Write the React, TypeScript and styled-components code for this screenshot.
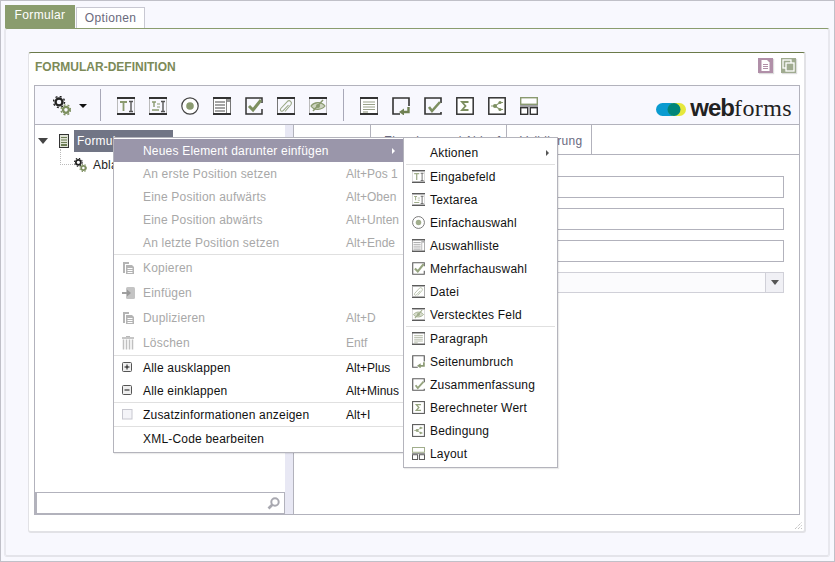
import React from "react";
import styled, { createGlobalStyle } from "styled-components";

const GlobalStyle = createGlobalStyle`
  html, body { margin: 0; padding: 0; background: #f8f8fe; }
  body { font-family: "Liberation Sans", Arial, sans-serif; font-size: 12px; }
  * { box-sizing: border-box; }
`;

const Window = styled.div`
  position: relative;
  width: 835px;
  height: 562px;
  overflow: hidden;
  padding-top: 4px;
  background: #f8f8fe;
  border: 1px solid #c0c0c8;
`;

const TabStrip = styled.div`
  display: flex;
  align-items: flex-end;
  height: 23px;
  margin-left: 4px;
  gap: 1px;
`;

const PageTab = styled.div<{ $active?: boolean }>`
  display: flex;
  align-items: center;
  justify-content: center;
  width: ${p => (p.$active ? "70px" : "69px")};
  height: ${p => (p.$active ? "23px" : "21px")};
  padding-bottom: ${p => (p.$active ? "3px" : "0")};
  color: ${p => (p.$active ? "#fff" : "#6a6a7c")};
  background: ${p => (p.$active ? "#8a9c6e" : "#fff")};
  border: ${p => (p.$active ? "none" : "1px solid #c8c8d2")};
  border-bottom: none;
  letter-spacing: 0.35px;
`;

const Panel = styled.div`
  width: 826px;
  height: 529px;
  margin-left: 3px;
  padding: 23px 0 0 22px;
  background: #f8f8fe;
  border-top: 1px solid #8a9c6e;
  border-left: 2px solid #e8e8ee;
  border-right: 2px solid #e8e8ee;
  border-bottom: 2px solid #e4e4ea;
  border-radius: 3px;
`;

const Card = styled.div`
  display: flex;
  flex-direction: column;
  width: 778px;
  height: 481px;
  padding: 0 5px;
  background: #fff;
  border-top: 1px solid #6b7a4a;
  border-left: 1px solid #e2e2e6;
  border-right: 2px solid #e2e2e6;
  border-bottom: 2px solid #e2e2e6;
  border-radius: 3px;
  position: relative;
`;

const CardHeader = styled.div`
  display: flex;
  align-items: center;
  justify-content: space-between;
  flex: 0 0 32px;
  padding: 0 3px 0 1px;
`;

const CardTitle = styled.h2`
  margin: 0 0 4px;
  font-size: 12px;
  font-weight: bold;
  color: #7c8a58;
`;

const HeaderActions = styled.div`
  display: flex;
  gap: 8px;
  margin-top: -8px;
`;

const ActionButton = styled.span<{ $bg: string }>`
  display: flex;
  width: 15px;
  height: 15px;
  background: ${p => p.$bg};
  box-shadow: 1px 1px 1px #ddd;
`;

const Editor = styled.div`
  display: flex;
  flex-direction: column;
  width: 766px;
  height: 430px;
  border: 1px solid #b2b2bc;
`;

const Toolbar = styled.div`
  display: flex;
  align-items: center;
  flex: 0 0 39px;
  padding-top: 2px;
  background: #f8f8fe;
  border-bottom: 1px solid #b2b2bc;
`;

const GearButton = styled.div`
  display: flex;
  align-items: center;
  gap: 8px;
  padding-left: 18px;
  width: 65px;
`;

const Caret = styled.span`
  width: 0;
  height: 0;
  border-left: 4px solid transparent;
  border-right: 4px solid transparent;
  border-top: 4px solid #111;
`;

const ToolDivider = styled.span`
  flex: none;
  width: 1px;
  height: 32px;
  margin-top: -2px;
  background: #a8a8b8;
`;

const ToolGroup = styled.div`
  display: flex;
  gap: 14px;
  padding: 0 16px;
`;

const Logo = styled.div`
  display: flex;
  align-items: center;
  gap: 4px;
  margin-left: auto;
  margin-right: 7px;
  margin-top: 3px;
  svg {
    margin-top: 3px;
  }
`;

const LogoText = styled.span`
  font-size: 24px;
  line-height: 24px;
  letter-spacing: 0.4px;
  color: #222;
  font-family: "Liberation Serif", serif;
  b {
    font-family: "Liberation Sans", sans-serif;
    font-weight: bold;
    letter-spacing: -1px;
  }
`;

const Body = styled.div`
  display: flex;
  flex: 1;
  min-height: 0;
`;

const TreePane = styled.div`
  display: flex;
  flex-direction: column;
  flex: 0 0 250px;
`;

const Tree = styled.div`
  flex: 1;
  padding: 5px 0 0 3px;
`;

const TreeRow = styled.div`
  display: flex;
  align-items: center;
  height: 22px;
`;

const TreeRowChild = styled(TreeRow)`
  position: relative;
  height: 24px;
  margin-top: 1px;
  padding-left: 36px;
  gap: 6px;
`;

const TreeDots = styled.span`
  position: absolute;
  left: 22px;
  top: -4px;
  width: 13px;
  height: 16px;
  border-left: 1px dotted #bbb;
  border-bottom: 1px dotted #bbb;
`;

const Twist = styled.span`
  width: 0;
  height: 0;
  margin-right: 11px;
  border-left: 5px solid transparent;
  border-right: 5px solid transparent;
  border-top: 6px solid #444;
`;

const TreeSelected = styled.span`
  display: block;
  width: 99px;
  height: 22px;
  margin-left: 5px;
  padding-left: 3px;
  line-height: 22px;
  white-space: nowrap;
  color: #fff;
  background: #717585;
  letter-spacing: 0.2px;
`;

const TreeLabel = styled.span`
  color: #222;
  letter-spacing: 0.2px;
`;

const SearchBar = styled.div`
  display: flex;
  align-items: center;
  justify-content: flex-end;
  height: 22px;
  padding-right: 4px;
  border: 1px solid #b2b2bc;
  border-left-width: 2px;
`;

const Splitter = styled.div`
  flex: 0 0 8px;
  background: #e8e8f4;
`;

const DetailPane = styled.div`
  display: flex;
  flex: 1;
  flex-direction: column;
  border-left: 1px solid #b2b2bc;
`;

const DetailTabs = styled.div`
  display: flex;
  height: 30px;
  border-bottom: 1px solid #b2b2bc;
`;

const DetailTab = styled.div<{ $w: number }>`
  width: ${p => p.$w}px;
  padding: 9px 0 0 13px;
  color: #6a6a80;
  letter-spacing: 0.3px;
  border-right: 1px solid #b2b2bc;
`;

const Form = styled.div`
  display: flex;
  flex-direction: column;
  gap: 10px;
  padding: 21px 15px 0 120px;
`;

const Field = styled.div`
  height: 22px;
  border: 1px solid #b2b2bc;
`;

const SelectField = styled.div`
  display: flex;
  justify-content: flex-end;
  height: 21px;
  border: 1px solid #d0d0d8;
  background: #fbfbfd;
`;

const SelectButton = styled.span`
  display: flex;
  align-items: center;
  justify-content: center;
  width: 18px;
  background: #f0f0f5;
  border-left: 1px solid #d0d0d8;
`;

const SelectArrow = styled.span`
  width: 0;
  height: 0;
  border-left: 4px solid transparent;
  border-right: 4px solid transparent;
  border-top: 5px solid #555;
`;

const Grip = styled.span`
  position: absolute;
  right: 1px;
  bottom: 1px;
  display: flex;
`;

const Menu = styled.div`
  position: absolute;
  background: #fff;
  border: 1px solid #b4b4bc;
  box-shadow: 1px 1px 1px rgba(0, 0, 0, 0.08);
  color: #111;
`;

const MainMenu = styled(Menu)`
  left: 112px;
  top: 136px;
  width: 291px;
  height: 316px;
  padding-top: 1px;
`;

const SubMenu = styled(Menu)`
  left: 402px;
  top: 136px;
  width: 155px;
  height: 331px;
  padding-top: 3px;
`;

const Row = styled.div<{ $h?: number; $disabled?: boolean; $active?: boolean }>`
  display: flex;
  align-items: center;
  height: ${p => p.$h ?? 23}px;
  padding-left: 8px;
  letter-spacing: 0.2px;
  color: ${p => (p.$active ? "#fff" : p.$disabled ? "#a8a8a8" : "#111")};
  background: ${p => (p.$active ? "#9a96aa" : "transparent")};
`;

const RowIcon = styled.span`
  display: flex;
  flex: 0 0 21px;
`;

const RowLabel = styled.span`
  flex: 1;
  white-space: nowrap;
`;

const RowKey = styled.span`
  flex: 0 0 57px;
  letter-spacing: 0;
  white-space: nowrap;
`;

const RowArrow = styled.span<{ $color: string }>`
  width: 0;
  height: 0;
  margin-right: 8px;
  border-top: 3px solid transparent;
  border-bottom: 3px solid transparent;
  border-left: 3px solid ${p => p.$color};
`;

const Sep = styled.div<{ $inset?: number }>`
  height: 1px;
  margin: 0 ${p => p.$inset ?? 0}px;
  background: #e0e0e0;
`;

const SubIcon = styled.span`
  display: flex;
  flex: 0 0 18px;
  opacity: 0.8;
`;

type IconName =
  | "input" | "textarea" | "radio" | "list" | "check" | "file" | "hidden"
  | "paragraph" | "pagebreak" | "summary" | "sum" | "branch" | "layout";

const DARK = "#333";
const GREEN = "#8a9a70";

const TopBottom = () => (
  <>
    <rect x="0" y="0" width="18" height="2" fill={DARK} />
    <rect x="0" y="16" width="18" height="2" fill={DARK} />
    <path d="M.5 2v14M17.5 2v14" stroke="#bbb" fill="none" />
  </>
);

const OpenBox = () => (
  <path d="M17 6V1H1v16h16v-2" stroke={DARK} strokeWidth="1.6" fill="none" />
);

const shapes: Record<IconName, React.ReactNode> = {
  input: (
    <>
      <TopBottom />
      <path d="M3 5h7M6.500 5v9" stroke={GREEN} strokeWidth="1.800" fill="none" />
      <path d="M12 4.500h4M12 14.500h4M14 4.500v10" stroke="#555" strokeWidth="1.400" fill="none" />
    </>
  ),
  textarea: (
    <>
      <TopBottom />
      <path d="M3 5h4M5 5v5M3 13h7" stroke={GREEN} strokeWidth="1.400" fill="none" />
      <path d="M8 7h3M8 10h3" stroke={GREEN} strokeWidth="1" />
      <path d="M12 4.500h4M12 14.500h4M14 4.500v10" stroke="#555" strokeWidth="1.400" fill="none" />
    </>
  ),
  radio: (
    <>
      <circle cx="9" cy="9" r="8.200" fill="#fff" stroke="#444" strokeWidth="1.200" />
      <circle cx="9" cy="9" r="3.800" fill={GREEN} />
    </>
  ),
  list: (
    <>
      <rect x=".5" y=".5" width="17" height="17" fill="#fff" stroke="#777" />
      <rect x="0" y="0" width="18" height="2" fill={DARK} />
      <rect x="0" y="16" width="18" height="2" fill={DARK} />
      <path d="M2 5h10M2 8h10M2 11h10M2 14h10" stroke="#888" strokeWidth="1.300" />
      <path d="M13.500 2v14" stroke="#888" />
      <rect x="14" y="2" width="3" height="3" fill="#999" />
    </>
  ),
  check: (
    <>
      <path d="M17 6V1H1v16h16v-5" stroke={DARK} strokeWidth="1.500" fill="none" />
      <path d="M4 9l4 4 8-10" stroke="#7d8f60" strokeWidth="3" fill="none" />
    </>
  ),
  file: (
    <>
      <TopBottom />
      <path d="M.5 2v14M17.500 2v14" stroke="#777" fill="none" />
      <path
        d="M8 14.500L14 7.500a2.400 2.400 0 0 0-3.500-3.200L3.800 11.500a1.600 1.600 0 0 0 2.400 2.200L11.500 8"
        stroke="#9aa886"
        strokeWidth="1.100"
        fill="none"
      />
    </>
  ),
  hidden: (
    <>
      <TopBottom />
      <path d="M2 9c3-4 10-5 14 0-3 4-11 5-14 0z" fill="#cdd3c0" stroke={GREEN} strokeWidth="1.200" />
      <circle cx="9" cy="9" r="2" fill={GREEN} />
      <path d="M4 14L14 3" stroke={GREEN} strokeWidth="1.500" />
    </>
  ),
  paragraph: (
    <>
      <rect x=".5" y=".5" width="17" height="17" fill="#fff" stroke="#777" />
      <rect x="0" y="0" width="18" height="2" fill={DARK} />
      <rect x="0" y="16" width="18" height="2" fill={DARK} />
      <path d="M3 5h12M3 7.500h12M3 10h12M3 12.500h12" stroke="#9aa28a" strokeWidth="1.200" />
      <path d="M3 15h5" stroke="#9aa28a" strokeWidth="1.200" />
    </>
  ),
  pagebreak: (
    <>
      <path d="M17 9V1H1v16h7" stroke={DARK} strokeWidth="1.600" fill="none" />
      <path d="M16.500 10v5h-6" stroke="#6f8152" strokeWidth="2.400" fill="none" />
      <path d="M12 11.500v7l-5-3.500z" fill="#6f8152" />
    </>
  ),
  summary: (
    <>
      <OpenBox />
      <path d="M5 10l3 4 8-9" stroke="#7d8f60" strokeWidth="2.600" fill="none" />
    </>
  ),
  sum: (
    <>
      <rect x=".8" y=".8" width="16.400" height="16.400" fill="#fff" stroke={DARK} strokeWidth="1.500" />
      <path d="M12.500 5H6l3.500 4L6 13h6.500" stroke="#7d8f60" strokeWidth="1.800" fill="none" />
    </>
  ),
  branch: (
    <>
      <rect x=".8" y=".8" width="16.400" height="16.400" fill="#fff" stroke={DARK} strokeWidth="1.500" />
      <path d="M3 9h4l5-3.500h3M7 9l5 3.500h3" stroke={GREEN} strokeWidth="1.100" fill="none" />
      <circle cx="7" cy="9" r="2" fill="#7d8f60" />
      <circle cx="12" cy="5.500" r="1.600" fill="#7d8f60" />
      <circle cx="12" cy="12.500" r="1.600" fill="#7d8f60" />
    </>
  ),
  layout: (
    <>
      <rect x=".7" y=".7" width="16.600" height="6.600" fill="#fff" stroke={GREEN} strokeWidth="1.400" />
      <rect x=".7" y="10.700" width="7" height="6.600" fill="#fff" stroke={DARK} strokeWidth="1.400" />
      <rect x="10.300" y="10.700" width="7" height="6.600" fill="#fff" stroke={DARK} strokeWidth="1.400" />
      <path d="M0 9h18" stroke="#666" strokeWidth="1.200" />
    </>
  ),
};

const FieldIcon = ({ name, size = 18 }: { name: IconName; size?: number }) => (
  <svg width={size} height={size} viewBox="0 0 18 18">
    {shapes[name]}
  </svg>
);

const GearIcon = ({ size = 18 }: { size?: number }) => (
  <svg width={size} height={size * 1.1} viewBox="0 0 18 20">
    <circle cx="6" cy="6" r="3.500" fill="none" stroke="#222" strokeWidth="2.400" />
    <circle cx="6" cy="6" r="5.600" fill="none" stroke="#222" strokeWidth="1.400" strokeDasharray="2 2.400" />
    <circle cx="13" cy="14" r="3" fill="none" stroke="#7d8f60" strokeWidth="2.400" />
    <circle cx="13" cy="14" r="5" fill="none" stroke="#7d8f60" strokeWidth="1.400" strokeDasharray="2 2.100" />
  </svg>
);

const FormIcon = () => (
  <svg width="10" height="14" viewBox="0 0 10 14">
    <rect x=".5" y=".5" width="9" height="13" fill="#dfe3d6" stroke="#333" />
    <path d="M2 3.500h6M2 6h6M2 8.500h6" stroke="#6d7d55" />
    <rect x="2" y="10" width="6" height="2" fill="#6d7d55" />
  </svg>
);

const SearchIcon = () => (
  <svg width="13" height="13" viewBox="0 0 13 13">
    <circle cx="8" cy="5" r="3.700" fill="none" stroke="#a8a8b0" strokeWidth="2" />
    <path d="M5.500 7.500L1.500 11.500" stroke="#a8a8b0" strokeWidth="2.600" />
  </svg>
);

const CopyIcon = () => (
  <svg width="13" height="14" viewBox="0 0 13 14">
    <path d="M1 1h6v2H3v9H1z" fill="#b4b4b4" />
    <path d="M4 4h6l2 2v7H4z" fill="#b4b4b4" />
    <path d="M5.500 7.500h5M5.500 9.500h5M5.500 11.500h5" stroke="#fff" />
  </svg>
);

const PasteIcon = () => (
  <svg width="14" height="14" viewBox="0 0 14 14">
    <rect x="4" y="1" width="9" height="12" rx="1.500" fill="#c4c4c4" />
    <path d="M0 7h6" stroke="#a0a0a0" strokeWidth="2" />
    <path d="M5 3.500L9 7l-4 3.500z" fill="#999" />
  </svg>
);

const TrashIcon = () => (
  <svg width="12" height="14" viewBox="0 0 12 14">
    <path d="M0 2h12" stroke="#b8b8b8" strokeWidth="1.600" />
    <path d="M1.500 3.500v10M4.500 3.500v10M7.500 3.500v10M10.500 3.500v10" stroke="#c0c0c0" strokeWidth="1.500" />
    <path d="M4 .5h4" stroke="#b8b8b8" />
  </svg>
);

const TreeBoxIcon = ({ plus }: { plus?: boolean }) => (
  <svg width="11" height="11" viewBox="0 0 11 11">
    <rect x=".5" y=".5" width="9" height="9" rx="1" fill="#eee" stroke="#555" />
    <path d="M2.500 5h5" stroke="#111" />
    {plus && <path d="M5 2.500v5" stroke="#111" />}
  </svg>
);

const BlankBox = () => (
  <svg width="11" height="11" viewBox="0 0 11 11">
    <rect x=".5" y=".5" width="9.500" height="9.500" fill="#f4f4f8" stroke="#c8c8d0" />
  </svg>
);

const toolGroupA: IconName[] = ["input", "textarea", "radio", "list", "check", "file", "hidden"];
const toolGroupB: IconName[] = ["paragraph", "pagebreak", "summary", "sum", "branch", "layout"];

const subItemsA: [IconName, string][] = [
  ["input", "Eingabefeld"],
  ["textarea", "Textarea"],
  ["radio", "Einfachauswahl"],
  ["list", "Auswahlliste"],
  ["check", "Mehrfachauswahl"],
  ["file", "Datei"],
  ["hidden", "Verstecktes Feld"],
];

const subItemsB: [IconName, string][] = [
  ["paragraph", "Paragraph"],
  ["pagebreak", "Seitenumbruch"],
  ["summary", "Zusammenfassung"],
  ["sum", "Berechneter Wert"],
  ["branch", "Bedingung"],
  ["layout", "Layout"],
];

const moveItems = [
  ["An erste Position setzen", "Alt+Pos 1"],
  ["Eine Position aufwärts", "Alt+Oben"],
  ["Eine Position abwärts", "Alt+Unten"],
  ["An letzte Position setzen", "Alt+Ende"],
];

const App = () => (
  <>
    <GlobalStyle />
    <Window>
      <TabStrip>
        <PageTab $active>Formular</PageTab>
        <PageTab>Optionen</PageTab>
      </TabStrip>
      <Panel>
        <Card>
          <CardHeader>
            <CardTitle>FORMULAR-DEFINITION</CardTitle>
            <HeaderActions>
              <ActionButton $bg="#b08fa8">
                <svg width="15" height="15" viewBox="0 0 15 15">
                  <path d="M3.500 2h5.500l2.500 2.500V13h-8z" fill="#fff" />
                  <path d="M5 6.500h5M5 8.500h5M5 10.500h5" stroke="#b08fa8" />
                </svg>
              </ActionButton>
              <ActionButton $bg="#a0ab90">
                <svg width="15" height="15" viewBox="0 0 15 15">
                  <rect x="2" y="2" width="8" height="8" fill="none" stroke="#fff" strokeWidth="1.300" />
                  <rect x="5" y="5" width="8" height="8" fill="#a0ab90" stroke="#fff" strokeWidth="1.300" />
                </svg>
              </ActionButton>
            </HeaderActions>
          </CardHeader>
          <Editor>
            <Toolbar>
              <GearButton>
                <GearIcon />
                <Caret />
              </GearButton>
              <ToolDivider />
              <ToolGroup>
                {toolGroupA.map(name => (
                  <FieldIcon key={name} name={name} />
                ))}
              </ToolGroup>
              <ToolDivider />
              <ToolGroup>
                {toolGroupB.map(name => (
                  <FieldIcon key={name} name={name} />
                ))}
              </ToolGroup>
              <Logo>
                <svg width="30" height="13" viewBox="0 0 30 13">
                  <rect x="0" y="0" width="24" height="13" rx="6.500" fill="#0a9bd0" />
                  <rect x="12" y="0" width="18" height="13" rx="6.500" fill="#e6e83c" />
                  <path d="M18 0a6.500 6.500 0 0 1 0 13 6.500 6.500 0 0 1 0-13z" fill="#00857a" />
                </svg>
                <LogoText>
                  <b>web</b>forms
                </LogoText>
              </Logo>
            </Toolbar>
            <Body>
              <TreePane>
                <Tree>
                  <TreeRow>
                    <Twist />
                    <FormIcon />
                    <TreeSelected>Formular</TreeSelected>
                  </TreeRow>
                  <TreeRowChild>
                    <TreeDots />
                    <GearIcon size={13} />
                    <TreeLabel>Ablauf</TreeLabel>
                  </TreeRowChild>
                </Tree>
                <SearchBar>
                  <SearchIcon />
                </SearchBar>
              </TreePane>
              <Splitter />
              <DetailPane>
                <DetailTabs>
                  <DetailTab $w={77} />
                  <DetailTab $w={136}>Eingaben und Ablauf</DetailTab>
                  <DetailTab $w={85}>Validierung</DetailTab>
                </DetailTabs>
                <Form>
                  <Field />
                  <Field />
                  <Field />
                  <SelectField>
                    <SelectButton>
                      <SelectArrow />
                    </SelectButton>
                  </SelectField>
                </Form>
              </DetailPane>
            </Body>
          </Editor>
          <Grip>
            <svg width="9" height="9" viewBox="0 0 9 9">
              <path d="M1 8l7-7M4 8l4-4M7 8l1-1" stroke="#aaa" strokeDasharray="1 1" />
            </svg>
          </Grip>
        </Card>
      </Panel>

      <MainMenu>
        <Row $active>
          <RowIcon />
          <RowLabel>Neues Element darunter einfügen</RowLabel>
          <RowArrow $color="#fff" />
        </Row>
        {moveItems.map(([label, key]) => (
          <Row key={label} $disabled>
            <RowIcon />
            <RowLabel>{label}</RowLabel>
            <RowKey>{key}</RowKey>
          </Row>
        ))}
        <Sep />
        <Row $h={25} $disabled>
          <RowIcon><CopyIcon /></RowIcon>
          <RowLabel>Kopieren</RowLabel>
          <RowKey />
        </Row>
        <Row $h={25} $disabled>
          <RowIcon><PasteIcon /></RowIcon>
          <RowLabel>Einfügen</RowLabel>
          <RowKey />
        </Row>
        <Row $h={25} $disabled>
          <RowIcon><CopyIcon /></RowIcon>
          <RowLabel>Duplizieren</RowLabel>
          <RowKey>Alt+D</RowKey>
        </Row>
        <Row $h={25} $disabled>
          <RowIcon><TrashIcon /></RowIcon>
          <RowLabel>Löschen</RowLabel>
          <RowKey>Entf</RowKey>
        </Row>
        <Sep />
        <Row>
          <RowIcon><TreeBoxIcon plus /></RowIcon>
          <RowLabel>Alle ausklappen</RowLabel>
          <RowKey>Alt+Plus</RowKey>
        </Row>
        <Row>
          <RowIcon><TreeBoxIcon /></RowIcon>
          <RowLabel>Alle einklappen</RowLabel>
          <RowKey>Alt+Minus</RowKey>
        </Row>
        <Sep />
        <Row>
          <RowIcon><BlankBox /></RowIcon>
          <RowLabel>Zusatzinformationen anzeigen</RowLabel>
          <RowKey>Alt+I</RowKey>
        </Row>
        <Sep />
        <Row>
          <RowIcon />
          <RowLabel>XML-Code bearbeiten</RowLabel>
          <RowKey />
        </Row>
      </MainMenu>

      <SubMenu>
        <Row>
          <SubIcon />
          <RowLabel>Aktionen</RowLabel>
          <RowArrow $color="#555" />
        </Row>
        <Sep $inset={2} />
        {subItemsA.map(([icon, label]) => (
          <Row key={label}>
            <SubIcon><FieldIcon name={icon} size={13} /></SubIcon>
            <RowLabel>{label}</RowLabel>
          </Row>
        ))}
        <Sep $inset={2} />
        {subItemsB.map(([icon, label]) => (
          <Row key={label}>
            <SubIcon><FieldIcon name={icon} size={13} /></SubIcon>
            <RowLabel>{label}</RowLabel>
          </Row>
        ))}
      </SubMenu>
    </Window>
  </>
);

export default App;
